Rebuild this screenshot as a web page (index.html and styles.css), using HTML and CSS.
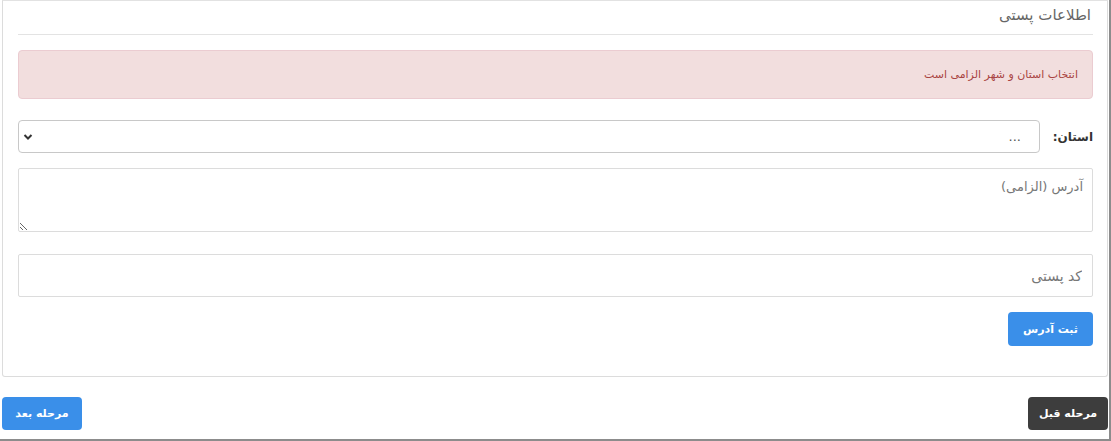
FILE: index.html
```html
<!DOCTYPE html>
<html lang="fa" dir="rtl">

<head>
    <meta charset="UTF-8">
    <title>اطلاعات پستی</title>

    <link rel="stylesheet" href="styles.css">
</head>

<body>
    <div class="page">
        <div class="card">
            <h4 class="card-title">اطلاعات پستی</h4>

            <div class="alert">انتخاب استان و شهر الزامی است</div>

            <div class="form-row">
                <label class="label" for="province">استان:</label>
                <div class="select-wrap">
                    <select id="province" class="select">
                        <option>...</option>
                    </select>
                    <svg class="chevron" width="10" height="8" viewBox="0 0 10 8">
                        <path d="M1.5 2 L5 5.5 L8.5 2" fill="none" stroke="#333" stroke-width="2" />
                    </svg>
                </div>
            </div>

            <textarea class="textarea" placeholder="آدرس (الزامی)"></textarea>

            <input class="input" type="text" placeholder="کد پستی" />

            <div class="actions">
                <button class="btn btn-blue">ثبت آدرس</button>
            </div>
        </div>

        <div class="steps">
            <button class="btn btn-dark">مرحله قبل</button>
            <button class="btn btn-blue">مرحله بعد</button>
        </div>
    </div>
</body>

</html>
```

FILE: styles.css
```css
* {
    font-family: Tahoma, "DejaVu Sans", sans-serif;
    box-sizing: border-box;
}

html,
body {
    height: 100%;
    padding: 0;
    margin: 0;
    background-color: white;
}

.page {
    width: 1111px;
    height: 441px;
    padding: 0 1px 0 2px;
    border-right: 2px solid #8c8c8c;
    border-bottom: 2px solid #8c8c8c;
}

.card {
    border: 1px solid #dcdcdc;
    border-top-color: #e2e2e2;
    border-radius: 0 0 3px 3px;
    padding: 4px 14px 30px 15px;
    height: 377px;
}

.card-title {
    margin: 0;
    padding: 1px 2px 10px 0;
    font-size: 15px;
    font-weight: normal;
    color: #666;
    border-bottom: 1px solid #e3e3e3;
}

.alert {
    margin-top: 15px;
    height: 49px;
    padding: 0 14px;
    display: flex;
    align-items: center;
    background-color: #f2dede;
    border: 1px solid #ebccd1;
    border-radius: 4px;
    color: #a94442;
    font-size: 11px;
}

.form-row {
    margin-top: 21px;
    display: flex;
    align-items: center;
    gap: 16px;
}

.label {
    width: 37px;
    font-size: 12px;
    font-weight: bold;
    color: #333;
}

.select-wrap {
    position: relative;
    flex: 1;
}

.select {
    width: 100%;
    height: 33px;
    padding: 0 18px 0 30px;
    border: 1px solid #c8c8c8;
    border-radius: 4px;
    background-color: white;
    color: #555;
    font-size: 13px;
    appearance: none;
    outline: none;
}

.chevron {
    position: absolute;
    left: 5px;
    top: 13px;
}

.textarea {
    display: block;
    width: 100%;
    height: 64px;
    margin-top: 15px;
    padding: 10px 9px;
    border: 1px solid #dcdcdc;
    border-radius: 2px;
    font-size: 13px;
    color: #555;
    outline: none;
}

.input {
    display: block;
    width: 100%;
    height: 43px;
    margin-top: 22px;
    padding: 0 10px;
    border: 1px solid #dcdcdc;
    border-radius: 2px;
    font-size: 14px;
    color: #555;
    outline: none;
}

.textarea::placeholder,
.input::placeholder {
    color: #777;
}

.actions {
    margin-top: 15px;
    display: flex;
}

.btn {
    height: 34px;
    padding: 0 15px;
    border: none;
    border-radius: 4px;
    color: white;
    font-size: 11px;
    font-weight: bold;
    cursor: pointer;
}

.btn-blue {
    background-color: #3a8fe9;
}

.btn-dark {
    background-color: #3d3d3d;
}

.steps {
    margin-top: 20px;
    display: flex;
    justify-content: space-between;
}

.steps .btn {
    width: 80px;
    height: 33px;
    padding: 0;
}
```
